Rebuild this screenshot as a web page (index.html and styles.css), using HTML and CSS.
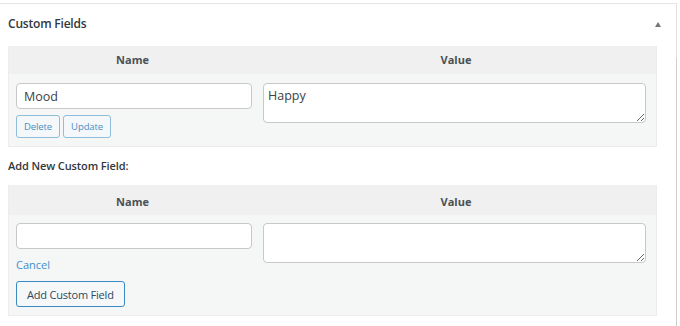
FILE: index.html
```html
<!DOCTYPE html>
<html lang="en">
<head>
    <meta charset="UTF-8">
    <meta name="viewport" content="width=device-width, initial-scale=1.0">
    <title>Custom Fields</title>
    <link rel="stylesheet" href="styles.css">
</head>
<body>
    <div class="postbox">
        <div class="postbox-header">
            <h2>Custom Fields</h2>
            <span class="toggle-arrow"></span>
        </div>

        <div class="inside">
            <div class="meta-table">
                <div class="meta-head">Name</div>
                <div class="meta-head">Value</div>

                <div class="cell-name">
                    <input type="text" class="text-input" value="Mood">
                    <div class="small-buttons">
                        <button class="btn-small">Delete</button>
                        <button class="btn-small">Update</button>
                    </div>
                </div>
                <div class="cell-value">
                    <textarea class="text-area">Happy</textarea>
                </div>
            </div>

            <p class="add-title">Add New Custom Field:</p>

            <div class="meta-table new-field">
                <div class="meta-head">Name</div>
                <div class="meta-head">Value</div>

                <div class="cell-name">
                    <input type="text" class="text-input" value="">
                    <a href="#" class="cancel-link">Cancel</a>
                    <button class="btn-secondary">Add Custom Field</button>
                </div>
                <div class="cell-value">
                    <textarea class="text-area"></textarea>
                </div>
            </div>
        </div>
    </div>
</body>
</html>
```

FILE: styles.css
```css
body {
    margin: 0;
    background: #fff;
    font-family: 'Open Sans', 'Noto Sans', sans-serif;
    color: #23282d;
}
.postbox {
    margin-top: 3px;
    width: 677px;
    height: 323px;
    border-top: 1px solid #e5e5e5;
    border-right: 1px solid #e2e2e2;
    box-sizing: border-box;
    position: relative;
}
/* scrollbar-ish darker edge on the right */
.postbox::after {
    content: "";
    position: absolute;
    top: 54px;
    right: -1px;
    width: 1px;
    bottom: 0;
    background: #cfcfcf;
}
.postbox-header {
    height: 38px;
    margin-bottom: 4px;
    display: flex;
    align-items: center;
    justify-content: space-between;
    padding: 0 15px 0 8px;
}
.postbox-header h2 {
    margin: 0;
    font-size: 12px;
    font-weight: 600;
    color: #32373c;
    letter-spacing: -0.2px;
}
.toggle-arrow {
    width: 0;
    height: 0;
    border-left: 3.5px solid transparent;
    border-right: 3.5px solid transparent;
    border-bottom: 5px solid #72777c;
    margin-top: 2px;
}
.inside {
    padding: 0 19px 0 8px;
}
.meta-table {
    display: grid;
    grid-template-columns: 247px 1fr;
    background: #f5f6f6;
    border: 1px solid #ececec;
    border-top: none;
}
.meta-head {
    background: #f0f0f0;
    height: 28px;
    line-height: 28px;
    text-align: center;
    font-size: 11px;
    font-weight: 700;
    color: #4a5056;
}
.new-field .meta-head {
    height: 30px;
    line-height: 33px;
}
.cell-name {
    padding: 9px 4px 8px 7px;
}
.cell-value {
    padding: 9px 10px 8px 7px;
}
.new-field .cell-name,
.new-field .cell-value {
    padding-top: 8px;
}
.text-input {
    display: block;
    width: 100%;
    height: 26px;
    box-sizing: border-box;
    border: 1px solid #c8c8c8;
    border-radius: 4px;
    padding: 0 7px;
    font-family: inherit;
    font-size: 12.5px;
    color: #3c4146;
    background: #fff;
}
.text-area {
    display: block;
    width: 100%;
    height: 40px;
    box-sizing: border-box;
    border: 1px solid #c8c8c8;
    border-radius: 4px;
    padding: 3px 4px;
    font-family: inherit;
    font-size: 12.5px;
    color: #3c4146;
    background: #fff;
    resize: vertical;
}
.small-buttons {
    display: flex;
    gap: 3px;
    margin-top: 6px;
}
.btn-small {
    height: 23px;
    padding: 0 7px;
    border: 1px solid #8fbddc;
    border-radius: 3px;
    background: #f5f8fa;
    color: #4a8ec2;
    font-family: inherit;
    font-size: 9.5px;
    letter-spacing: -0.1px;
}
.add-title {
    margin: 0;
    height: 38px;
    line-height: 38px;
    font-size: 11px;
    font-weight: 600;
    color: #32373c;
    letter-spacing: -0.1px;
}
.cancel-link {
    display: block;
    margin-top: 8px;
    font-size: 11px;
    line-height: 16px;
    color: #3f8ecb;
    text-decoration: none;
}
.btn-secondary {
    display: block;
    margin-top: 8px;
    height: 26px;
    padding: 0 10px;
    border: 1px solid #3a8ac4;
    border-radius: 3px;
    background: #f5f7f9;
    color: #2c4a60;
    font-family: inherit;
    font-size: 11px;
    letter-spacing: -0.2px;
}
```
